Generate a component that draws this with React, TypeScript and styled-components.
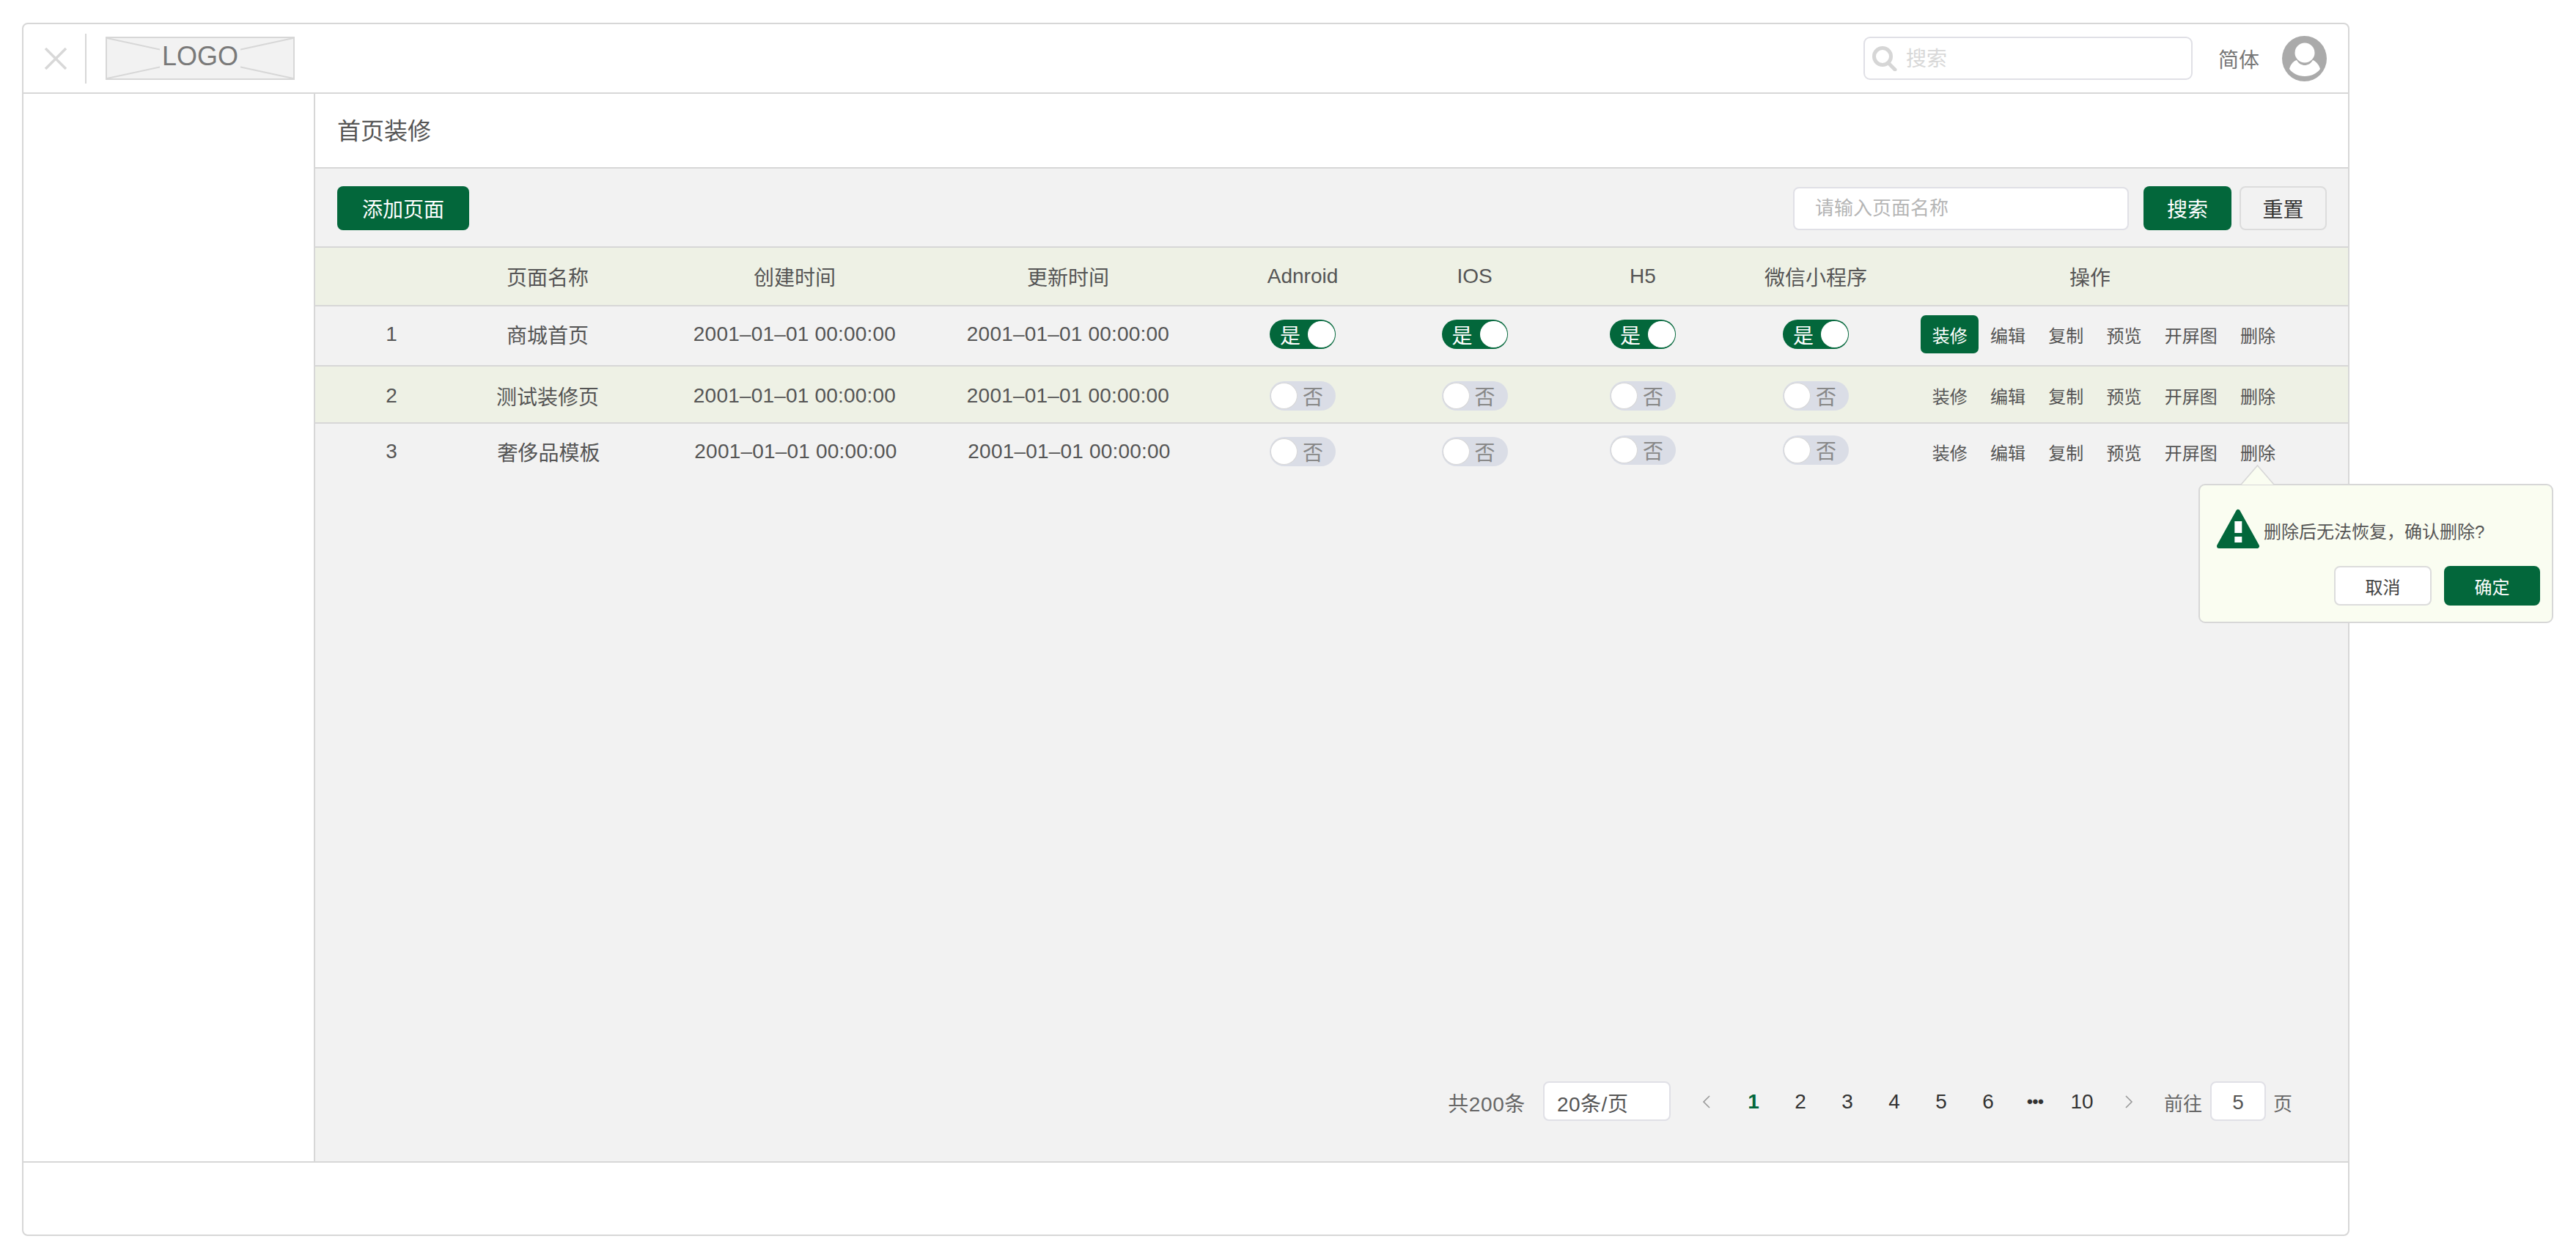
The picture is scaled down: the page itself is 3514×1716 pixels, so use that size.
import React from "react";
import styled, { createGlobalStyle } from "styled-components";

const GREEN = "#03673b";
const LINE = "#d7d7d7";
const FIELD = "#e0e0e6";
const TINT = "#eef1e5";
const PANEL = "#f2f2f2";
const COLUMNS = "208px 218px 456px 290px 350px 119px 340px 132px 616px 1fr";

const Global = createGlobalStyle`
  html, body { margin: 0; padding: 0; background: #fff; }
  body { font-family: "Liberation Sans", "Noto Sans CJK SC", sans-serif; color: #555; }
  * { box-sizing: border-box; }
`;

const Frame = styled.div`
  position: relative;
  margin: 31px 0 0 30px;
  width: 3175px;
  height: 1655px;
  border: 2px solid ${LINE};
  border-radius: 8px;
  display: flex;
  flex-direction: column;
`;

const Header = styled.header`
  height: 95px;
  flex: none;
  border-bottom: 2px solid ${LINE};
  display: flex;
  align-items: center;
  padding: 0 29px 0 28px;
`;
const CloseIcon = styled.svg`
  width: 32px;
  height: 30px;
  flex: none;
`;
const HeaderRule = styled.div`
  width: 2px;
  height: 68px;
  margin: 0 26px 0 24px;
  background: ${LINE};
`;
const Logo = styled.div`
  position: relative;
  width: 258px;
  height: 59px;
  background: ${PANEL};
  border: 2px solid ${LINE};
  display: flex;
  align-items: center;
  justify-content: center;
`;
const LogoLines = styled.svg`
  position: absolute;
  inset: 0;
  width: 100%;
  height: 100%;
`;
const LogoText = styled.span`
  position: relative;
  background: ${PANEL};
  padding: 0 3px;
  font-size: 36px;
  line-height: 40px;
  color: #797979;
  margin-top: -6px;
`;
const HeaderSearch = styled.div`
  margin-left: auto;
  width: 449px;
  height: 59px;
  border: 2px solid ${FIELD};
  border-radius: 9px;
  background: #fff;
  display: flex;
  align-items: center;
  padding-left: 10px;
  gap: 12px;
`;
const SearchIcon = styled.svg`
  width: 34px;
  height: 34px;
  flex: none;
`;
const HeaderSearchInput = styled.input`
  border: 0;
  outline: 0;
  background: transparent;
  flex: 1;
  min-width: 0;
  padding: 2px 0 0;
  font: 28px "Liberation Sans", "Noto Sans CJK SC", sans-serif;
  &::placeholder { color: #d8d8d8; opacity: 1; }
`;
const Lang = styled.span`
  margin-left: 35px;
  font-size: 28px;
  color: #777;
`;
const Avatar = styled.svg`
  width: 61px;
  height: 62px;
  margin-left: 31px;
  flex: none;
`;

const Body = styled.div`
  flex: 1;
  min-height: 0;
  display: flex;
`;
const Sidebar = styled.aside`
  width: 398px;
  flex: none;
  border-right: 2px solid ${LINE};
  background: #fff;
`;
const Main = styled.main`
  flex: 1;
  min-width: 0;
  background: ${PANEL};
  display: flex;
  flex-direction: column;
`;
const TitleBar = styled.div`
  height: 102px;
  flex: none;
  background: #fff;
  border-bottom: 2px solid ${LINE};
  display: flex;
  align-items: center;
  padding: 0 0 4px 30px;
  font-size: 32px;
  color: #555;
`;
const Toolbar = styled.div`
  height: 108px;
  flex: none;
  border-bottom: 2px solid ${LINE};
  display: flex;
  align-items: center;
  justify-content: space-between;
  padding: 2px 29px 0 30px;
`;
const ToolGroup = styled.div`
  display: flex;
  align-items: center;
`;
const Primary = styled.button<{ $w: number }>`
  width: ${(p) => p.$w}px;
  height: 60px;
  border: 0;
  border-radius: 8px;
  background: ${GREEN};
  color: #fff;
  font: 28px "Liberation Sans", "Noto Sans CJK SC", sans-serif;
  padding: 0;
`;
const Reset = styled.button`
  width: 119px;
  height: 60px;
  margin-left: 11px;
  border: 2px solid #dcdcdc;
  border-radius: 8px;
  background: ${PANEL};
  color: #333;
  font: 28px "Liberation Sans", "Noto Sans CJK SC", sans-serif;
  padding: 0;
`;
const NameInput = styled.input`
  width: 458px;
  height: 59px;
  margin-right: 20px;
  border: 2px solid ${FIELD};
  border-radius: 8px;
  background: #fff;
  outline: 0;
  padding: 0 0 0 28px;
  font: 26px "Liberation Sans", "Noto Sans CJK SC", sans-serif;
  &::placeholder { color: #b5b5b5; opacity: 1; }
`;

const Row = styled.div<{ $h: number; $tint?: boolean; $top?: number; $bottom?: number }>`
  height: ${(p) => p.$h}px;
  flex: none;
  display: grid;
  grid-template-columns: ${COLUMNS};
  align-items: center;
  background: ${(p) => (p.$tint ? TINT : PANEL)};
  border-bottom: 2px solid ${LINE};
  padding: ${(p) => p.$top ?? 0}px 0 ${(p) => p.$bottom ?? 0}px;
  font-size: 28px;
  color: #555;
`;
const Cell = styled.div<{ $shift?: number }>`
  display: flex;
  justify-content: center;
  align-items: center;
  white-space: nowrap;
  padding-left: ${(p) => p.$shift ?? 0}px;
`;
const DateCell = styled(Cell)`
  letter-spacing: 0.2px;
`;
const LastRow = styled(Row)`
  border-bottom: 0;
`;
const Toggle = styled.div<{ $on: boolean; $lift?: boolean }>`
  width: 90px;
  height: 40px;
  border-radius: 20px;
  display: flex;
  flex-direction: ${(p) => (p.$on ? "row" : "row-reverse")};
  align-items: center;
  justify-content: space-between;
  padding: ${(p) => (p.$on ? "0 1px 0 14px" : "0 17px 0 1px")};
  background: ${(p) => (p.$on ? GREEN : "#dadde6")};
  color: ${(p) => (p.$on ? "#fff" : "#888")};
  font-size: 28px;
  margin-bottom: ${(p) => (p.$lift ? "4px" : "0")};
`;
const Knob = styled.span<{ $on: boolean }>`
  width: 37px;
  height: 36px;
  border-radius: 50%;
  background: #fff;
  border: 1px solid ${(p) => (p.$on ? "#fff" : LINE)};
`;
const Actions = styled.div`
  display: flex;
  align-items: center;
  justify-content: flex-start;
  padding-left: 77px;
`;
const Action = styled.span<{ $active?: boolean }>`
  height: 52px;
  padding: 0 15.65px;
  border-radius: 7px;
  display: flex;
  align-items: center;
  font-size: 24px;
  color: ${(p) => (p.$active ? "#fff" : "#555")};
  background: ${(p) => (p.$active ? GREEN : "transparent")};
`;

const Spacer = styled.div`
  flex: 1;
`;
const Pager = styled.div`
  height: 54px;
  margin-bottom: 55px;
  flex: none;
  display: flex;
  justify-content: flex-end;
  align-items: center;
  padding-right: 76px;
  font-size: 28px;
  color: #666;
`;
const PagerBox = styled.div<{ $w: number; $center?: boolean }>`
  width: ${(p) => p.$w}px;
  height: 54px;
  border: 2px solid ${FIELD};
  border-radius: 8px;
  background: #fff;
  display: flex;
  align-items: center;
  justify-content: ${(p) => (p.$center ? "center" : "flex-start")};
  padding: 3px 0 0 ${(p) => (p.$center ? 0 : 17)}px;
  font-size: 28px;
  letter-spacing: ${(p) => (p.$center ? 0 : 0.5)}px;
  color: #555;
`;
const Total = styled.span`
  margin: 3px 24px 0 0;
  letter-spacing: 0.6px;
`;
const Pages = styled.div`
  display: flex;
  margin: 2px 16px 0 17px;
`;
const PageItem = styled.span<{ $active?: boolean }>`
  width: 64px;
  height: 40px;
  display: flex;
  align-items: center;
  justify-content: center;
  font-size: 28px;
  font-weight: ${(p) => (p.$active ? 700 : 400)};
  color: ${(p) => (p.$active ? GREEN : "#333")};
`;
const Dots = styled(PageItem)`
  font-size: 24px;
  letter-spacing: -1px;
`;
const Chevron = styled.svg`
  width: 14px;
  height: 20px;
`;
const PagerLabel = styled.span<{ $side: "left" | "right" }>`
  font-size: 26px;
  margin-top: 3px;
  ${(p) => (p.$side === "left" ? "margin-right: 11px;" : "margin-left: 10px;")}
`;

const Footer = styled.footer`
  height: 100px;
  flex: none;
  border-top: 2px solid ${LINE};
  background: #fff;
  border-radius: 0 0 8px 8px;
`;

const Popover = styled.div`
  position: absolute;
  left: 2967px;
  top: 627px;
  width: 484px;
  height: 190px;
  background: #fafdf1;
  border: 2px solid ${LINE};
  border-radius: 9px;
  display: flex;
  flex-direction: column;
  padding: 32px 16px 0 23px;
`;
const PopArrow = styled.svg`
  position: absolute;
  left: 56px;
  top: -27px;
  width: 45px;
  height: 26px;
  overflow: visible;
`;
const PopMessage = styled.div`
  display: flex;
  align-items: center;
  font-size: 24px;
  color: #555;
  gap: 6px;
`;
const PopText = styled.span`
  margin-top: 3px;
`;
const WarnIcon = styled.svg`
  width: 58px;
  height: 55px;
  flex: none;
`;
const PopButtons = styled.div`
  display: flex;
  justify-content: flex-end;
  gap: 17px;
  margin-top: 23px;
`;
const PopCancel = styled.button`
  width: 133px;
  height: 54px;
  border: 2px solid #dcdcdc;
  border-radius: 8px;
  background: #fff;
  color: #444;
  font: 24px "Liberation Sans", "Noto Sans CJK SC", sans-serif;
  padding: 0;
`;
const PopConfirm = styled.button`
  width: 131px;
  height: 54px;
  border: 0;
  border-radius: 8px;
  background: ${GREEN};
  color: #fff;
  font: 24px "Liberation Sans", "Noto Sans CJK SC", sans-serif;
  padding: 0;
`;

const DATE = "2001–01–01 00:00:00";
const OPS = ["装修", "编辑", "复制", "预览", "开屏图", "删除"];

function Switch({ on, lift }: { on: boolean; lift?: boolean }) {
  return (
    <Toggle $on={on} $lift={lift}>
      <span>{on ? "是" : "否"}</span>
      <Knob $on={on} />
    </Toggle>
  );
}

function RowBody({ no, name, on, active, third }: { no: number; name: string; on: boolean; active?: boolean; third?: boolean }) {
  return (
    <>
      <Cell>{no}</Cell>
      <Cell $shift={third ? 3 : 0}>{name}</Cell>
      <DateCell $shift={third ? 3 : 0}>{DATE}</DateCell>
      <DateCell $shift={third ? 3 : 0}>{DATE}</DateCell>
      <Cell><Switch on={on} /></Cell>
      <Cell><Switch on={on} /></Cell>
      <Cell><Switch on={on} lift={third} /></Cell>
      <Cell><Switch on={on} lift={third} /></Cell>
      <Actions>
        {OPS.map((op, i) => (
          <Action key={op} $active={active && i === 0}>{op}</Action>
        ))}
      </Actions>
    </>
  );
}

export default function App() {
  return (
    <>
      <Global />
      <Frame>
        <Header>
          <CloseIcon viewBox="0 0 32 30">
            <path d="M2 1 L30 29 M30 1 L2 29" stroke="#d8d8d8" strokeWidth="3.5" fill="none" />
          </CloseIcon>
          <HeaderRule />
          <Logo>
            <LogoLines viewBox="0 0 254 55" preserveAspectRatio="none">
              <path d="M0 0 L254 55 M254 0 L0 55" stroke="#d7d7d7" strokeWidth="2" fill="none" />
            </LogoLines>
            <LogoText>LOGO</LogoText>
          </Logo>
          <HeaderSearch>
            <SearchIcon viewBox="0 0 34 34">
              <circle cx="14" cy="14" r="11.5" stroke="#d6d6d6" strokeWidth="5" fill="none" />
              <path d="M22 23 L31 32" stroke="#d6d6d6" strokeWidth="5" strokeLinecap="round" />
            </SearchIcon>
            <HeaderSearchInput placeholder="搜索" />
          </HeaderSearch>
          <Lang>简体</Lang>
          <Avatar viewBox="0 0 61 62">
            <ellipse cx="30.5" cy="31" rx="30.5" ry="31" fill="#aaaaaa" />
            <circle cx="31" cy="23" r="13.5" fill="#fff" />
            <path d="M10 45 C12 38 16 34 20 33 C23 38 27 40 31 40 C35 40 39 38 42 33 C45 34 50 38 52 45 C48 51 40 55 31 55 C22 55 14 51 10 45 Z" fill="#fff" />
          </Avatar>
        </Header>
        <Body>
          <Sidebar />
          <Main>
            <TitleBar>首页装修</TitleBar>
            <Toolbar>
              <Primary $w={180}>添加页面</Primary>
              <ToolGroup>
                <NameInput placeholder="请输入页面名称" />
                <Primary $w={120}>搜索</Primary>
                <Reset>重置</Reset>
              </ToolGroup>
            </Toolbar>
            <Row $h={80} $tint>
              <Cell />
              <Cell>页面名称</Cell>
              <Cell>创建时间</Cell>
              <Cell>更新时间</Cell>
              <Cell>Adnroid</Cell>
              <Cell>IOS</Cell>
              <Cell>H5</Cell>
              <Cell>微信小程序</Cell>
              <Cell>操作</Cell>
            </Row>
            <Row $h={82} $bottom={4}>
              <RowBody no={1} name="商城首页" on active />
            </Row>
            <Row $h={78} $tint $top={3}>
              <RowBody no={2} name="测试装修页" on={false} />
            </Row>
            <LastRow $h={76}>
              <RowBody no={3} name="奢侈品模板" on={false} third />
            </LastRow>
            <Spacer />
            <Pager>
              <Total>共200条</Total>
              <PagerBox $w={174}>20条/页</PagerBox>
              <Pages>
                <PageItem>
                  <Chevron viewBox="0 0 14 20">
                    <path d="M11 2 L3 10 L11 18" stroke="#999" strokeWidth="1.6" fill="none" />
                  </Chevron>
                </PageItem>
                <PageItem $active>1</PageItem>
                {[2, 3, 4, 5, 6].map((n) => (
                  <PageItem key={n}>{n}</PageItem>
                ))}
                <Dots>•••</Dots>
                <PageItem>10</PageItem>
                <PageItem>
                  <Chevron viewBox="0 0 14 20">
                    <path d="M3 2 L11 10 L3 18" stroke="#999" strokeWidth="1.6" fill="none" />
                  </Chevron>
                </PageItem>
              </Pages>
              <PagerLabel $side="left">前往</PagerLabel>
              <PagerBox $w={76} $center>5</PagerBox>
              <PagerLabel $side="right">页</PagerLabel>
            </Pager>
          </Main>
        </Body>
        <Footer />
        <Popover>
          <PopArrow viewBox="0 0 45 26">
            <path d="M0 26 L22.5 0 L45 26" fill="#fafdf1" stroke={LINE} strokeWidth="1.5" />
          </PopArrow>
          <PopMessage>
            <WarnIcon viewBox="0 0 58 55">
              <path d="M29 4 L55 51 L3 51 Z" fill={GREEN} stroke={GREEN} strokeWidth="6" strokeLinejoin="round" />
              <rect x="24.3" y="17" width="10" height="16" fill="#fff" />
              <rect x="24.3" y="38" width="10" height="8" fill="#fff" />
            </WarnIcon>
            <PopText>删除后无法恢复，确认删除?</PopText>
          </PopMessage>
          <PopButtons>
            <PopCancel>取消</PopCancel>
            <PopConfirm>确定</PopConfirm>
          </PopButtons>
        </Popover>
      </Frame>
    </>
  );
}
